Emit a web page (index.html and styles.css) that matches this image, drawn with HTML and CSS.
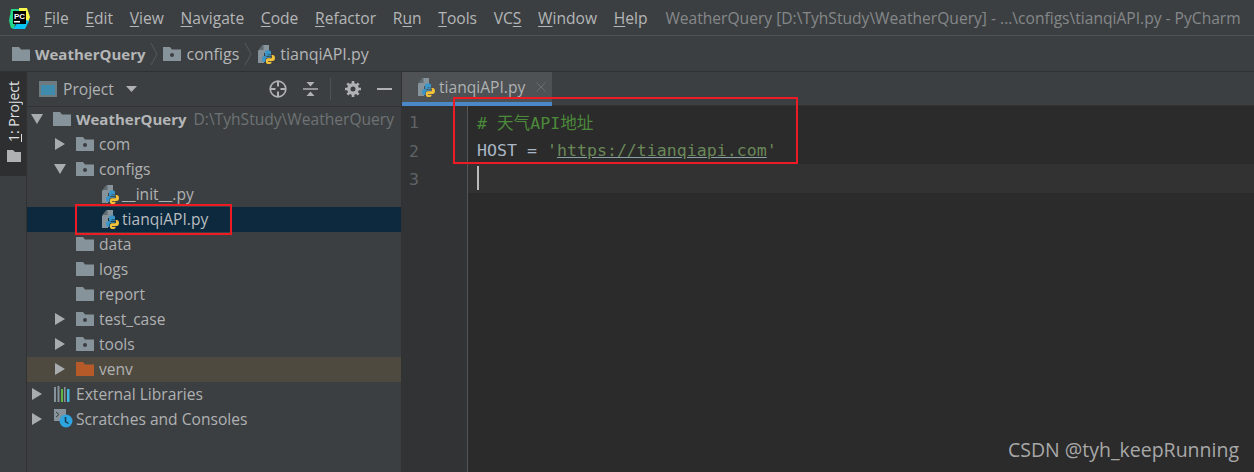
FILE: index.html
```html
<!DOCTYPE html>
<html lang="en">
<head>
<meta charset="utf-8">
<title>WeatherQuery - PyCharm</title>
<link rel="stylesheet" href="styles.css">
</head>
<body>
<svg class="defs" width="0" height="0">
  <defs>
    <symbol id="folder" viewBox="0 0 18 14"><path d="M0 0h7l2 2.500h9V14H0z" fill="#87939a"/></symbol>
    <symbol id="pkg" viewBox="0 0 18 14"><path d="M0 0h7l2 2.500h9V14H0z" fill="#87939a"/><circle cx="9" cy="8" r="2" fill="#3c3f41"/></symbol>
    <symbol id="venv" viewBox="0 0 18 14"><path d="M0 0h7l2 2.500h9V14H0z" fill="#b65a2a"/></symbol>
    <symbol id="py" viewBox="0 0 18 20">
      <path d="M1 7l5-6h6v8H7v10H1z" fill="#87939a"/>
      <path d="M5 1.500h1.500V6H1.500z" fill="#5f6a70"/>
      <path d="M8 8.500c0-1.500 1-2.200 3-2.200s3 .7 3 2v2.200H10.500v.8H14v.7H7.500c-1.500 0-2.500 1-2.500 3s1 3 2 3h1.500v-2.300c0-1.200.8-2 2-2H13c.8 0 1-.5 1-1H10c-1.200 0-2-.7-2-2z" fill="#3a95c8"/>
      <path d="M14.500 11h1.200c1.300 0 2.300 1 2.300 3s-1 3-2.300 3H11v.8h3.500v.9c0 .9-1.500 1.300-3 1.300s-2.500-.6-2.500-1.800V16c0-1 .8-1.700 1.800-1.700h2.900c.8 0 1.300-.6 1.300-1.300z" fill="#f2c23a"/>
    </symbol>
    <symbol id="right" viewBox="0 0 12 12"><path d="M1 0l10 6-10 6z" fill="#a9acae"/></symbol>
    <symbol id="down" viewBox="0 0 12 12"><path d="M0 1h12L6 11z" fill="#a9acae"/></symbol>
  </defs>
</svg>

<div class="app">
  <header class="menubar">
    <svg class="logo" width="21" height="21" viewBox="0 0 21 21">
      <path d="M2 1h10l-2 8-9-1z" fill="#21d789"/>
      <path d="M10 0h8l3 9-2 5-9-4z" fill="#fcf84a"/>
      <path d="M1 7l6 3-2 11-3-1-2-7z" fill="#21d789"/>
      <path d="M4 21h12l4-8-8-3z" fill="#07c3f2"/>
      <rect x="4" y="3" width="13" height="13" fill="#000"/>
      <text x="5" y="10.500" class="logo-text">PC</text>
      <rect x="5" y="13" width="6" height="1.500" fill="#fff"/>
    </svg>
    <nav class="menu">
      <span><u>F</u>ile</span><span><u>E</u>dit</span><span><u>V</u>iew</span><span><u>N</u>avigate</span><span><u>C</u>ode</span><span><u>R</u>efactor</span><span>R<u>u</u>n</span><span><u>T</u>ools</span><span>VC<u>S</u></span><span><u>W</u>indow</span><span><u>H</u>elp</span>
    </nav>
    <div class="title">WeatherQuery [D:\TyhStudy\WeatherQuery] - ...\configs\tianqiAPI.py - PyCharm</div>
  </header>

  <div class="navbar">
    <svg class="nav-icon" width="18" height="14"><use href="#folder"/></svg>
    <b class="crumb-bold">WeatherQuery</b>
    <svg class="chev" width="8" height="24" viewBox="0 0 8 24"><path d="M1 1l6 11-6 11" fill="none" stroke="#55595b"/></svg>
    <svg class="nav-icon" width="18" height="14"><use href="#pkg"/></svg>
    <span class="crumb">configs</span>
    <svg class="chev" width="8" height="24" viewBox="0 0 8 24"><path d="M1 1l6 11-6 11" fill="none" stroke="#55595b"/></svg>
    <svg class="nav-icon" width="18" height="20"><use href="#py"/></svg>
    <span class="crumb">tianqiAPI.py</span>
  </div>

  <div class="main">
    <aside class="stripe">
      <div class="stripe-tab">
        <span class="stripe-label"><u>1</u>: Project</span>
        <svg width="14" height="12" viewBox="0 0 14 12"><path d="M0 0h6l2 2h6v10H0z" fill="#afb1b3"/></svg>
      </div>
    </aside>

    <section class="project">
      <div class="proj-head">
        <svg class="proj-icon" width="18" height="16" viewBox="0 0 18 16"><rect width="18" height="16" fill="#6e7a80"/><rect x="2" y="4" width="14" height="10" fill="#3e8bae"/></svg>
        <span class="proj-title">Project</span>
        <svg class="proj-caret" width="11" height="6" viewBox="0 0 11 6"><path d="M0 0h11L5.500 6z" fill="#afb1b3"/></svg>
        <div class="proj-tools">
          <svg class="tool-target" width="18" height="18" viewBox="0 0 18 18"><circle cx="9" cy="9" r="7.800" fill="none" stroke="#afb1b3" stroke-width="1.700"/><path d="M9 1v5.500M9 11.500V17M1 9h5.500M11.500 9H17" stroke="#afb1b3" stroke-width="2"/></svg>
          <svg class="tool-collapse" width="15" height="16" viewBox="0 0 15 16"><path d="M0 8h15" stroke="#afb1b3" stroke-width="1.500"/><path d="M3.500 1h8l-4 4.500zM3.500 15h8l-4-4.500z" fill="#afb1b3"/></svg>
          <i class="tool-sep"></i>
          <svg class="tool-gear" width="16" height="16" viewBox="0 0 16 16"><circle cx="8" cy="8" r="4.200" fill="none" stroke="#afb1b3" stroke-width="3.400"/><path d="M8 0v16M0 8h16M2.300 2.300l11.400 11.400M13.700 2.300L2.300 13.700" stroke="#afb1b3" stroke-width="2.600" stroke-dasharray="3 10 3"/></svg>
          <svg class="tool-min" width="15" height="2" viewBox="0 0 15 2"><path d="M0 1h15" stroke="#afb1b3" stroke-width="2"/></svg>
        </div>
      </div>
      <ul class="tree">
        <li class="row l0"><svg class="arrow" width="12" height="12"><use href="#down"/></svg><svg class="ficon" width="18" height="14"><use href="#folder"/></svg><b>WeatherQuery</b><span class="path">D:\TyhStudy\WeatherQuery</span></li>
        <li class="row l1"><svg class="arrow" width="12" height="12"><use href="#right"/></svg><svg class="ficon" width="18" height="14"><use href="#pkg"/></svg>com</li>
        <li class="row l1"><svg class="arrow" width="12" height="12"><use href="#down"/></svg><svg class="ficon" width="18" height="14"><use href="#pkg"/></svg>configs</li>
        <li class="row l2"><svg class="ficon py" width="18" height="20"><use href="#py"/></svg>__init__.py</li>
        <li class="row l2 selected"><svg class="ficon py" width="18" height="20"><use href="#py"/></svg>tianqiAPI.py</li>
        <li class="row noarrow"><svg class="ficon" width="18" height="14"><use href="#folder"/></svg>data</li>
        <li class="row noarrow"><svg class="ficon" width="18" height="14"><use href="#folder"/></svg>logs</li>
        <li class="row noarrow"><svg class="ficon" width="18" height="14"><use href="#folder"/></svg>report</li>
        <li class="row l1"><svg class="arrow" width="12" height="12"><use href="#right"/></svg><svg class="ficon" width="18" height="14"><use href="#pkg"/></svg>test_case</li>
        <li class="row l1"><svg class="arrow" width="12" height="12"><use href="#right"/></svg><svg class="ficon" width="18" height="14"><use href="#pkg"/></svg>tools</li>
        <li class="row l1 excluded"><svg class="arrow" width="12" height="12"><use href="#right"/></svg><svg class="ficon" width="18" height="14"><use href="#venv"/></svg>venv</li>
        <li class="row l0"><svg class="arrow" width="12" height="12"><use href="#right"/></svg><svg class="ficon" width="18" height="16" viewBox="0 0 18 16"><path d="M1 1h2v15H1z" fill="#87939a"/><path d="M4.500 0h2v16h-2z" fill="#87939a"/><path d="M8 3h2v13H8z" fill="#62b543"/><path d="M11 1h1.500v15H11z" fill="#87939a"/><path d="M14 3h2.500v13H14z" fill="#40b6e0"/></svg>External Libraries</li>
        <li class="row l0"><svg class="arrow" width="12" height="12"><use href="#right"/></svg><svg class="ficon scr" width="20" height="19" viewBox="0 0 20 19"><path d="M1 0h12v12H1z" fill="#87939a"/><path d="M3 3l3 2.500L3 8" fill="none" stroke="#3c3f41" stroke-width="1"/><circle cx="13" cy="12" r="6.500" fill="#2da5e0"/><path d="M12.500 8v4.500l3 2" fill="none" stroke="#1b3a4b" stroke-width="1.500"/></svg>Scratches and Consoles</li>
      </ul>
    </section>

    <section class="editor">
      <div class="tabs">
        <div class="tab">
          <svg class="tab-icon" width="18" height="20"><use href="#py"/></svg>
          <span>tianqiAPI.py</span>
          <svg class="close" width="10" height="10" viewBox="0 0 10 10"><path d="M.5.500l9 9M9.500.500l-9 9" stroke="#6a6d6f"/></svg>
        </div>
      </div>
      <div class="code">
        <div class="gutter">
          <span class="num">1</span>
          <span class="num">2</span>
          <span class="num">3</span>
        </div>
        <div class="lines">
          <div class="line"><code class="comment"># 天气API地址</code></div>
          <div class="line"><code>HOST = <span class="str">'<span class="link">https://tianqiapi.com</span>'</span></code></div>
          <div class="line current"><i class="caret"></i></div>
        </div>
        <div class="watermark">CSDN @tyh_keepRunning</div>
      </div>
    </section>
  </div>
  <div class="mark mark-code"></div>
  <div class="mark mark-file"></div>
</div>
</body>
</html>
```

FILE: styles.css
```css
* { box-sizing: border-box; }
html, body { margin: 0; padding: 0; }
body { width: 1254px; height: 472px; overflow: hidden; background: #3c3f41; color: #afb1b3; font-family: "Open Sans", "Noto Sans", sans-serif; font-size: 15.600px; }
.defs { position: absolute; }
.app { position: relative; display: flex; flex-direction: column; width: 1254px; height: 472px; }

.menubar { display: flex; align-items: center; height: 36px; flex: none; background: #3c3f41; border-bottom: 1px solid #505355; padding-left: 9px; }
.logo { flex: none; margin: 2px 14px 0 0; }
.logo-text { font: bold 8px "Liberation Sans", sans-serif; fill: #fff; }
.menu { display: flex; gap: 16.700px; color: #b4b6b8; }
.menu u { text-underline-offset: 2px; }
.title { margin-left: 18px; color: #85888a; white-space: nowrap; }

.navbar { display: flex; align-items: center; height: 36px; flex: none; background: #3c3f41; border-bottom: 1px solid #2f3133; padding-left: 12px; }
.nav-icon { flex: none; margin-right: 5px; }
.crumb { color: #b4b6b8; font-size: 16px; }
.crumb-bold { color: #b4b6b8; font-size: 15px; }
.chev { flex: none; margin: 0 5px; }

.main { display: flex; flex: 1; min-height: 0; }
.stripe { width: 27px; flex: none; background: #3c3f41; border-right: 1px solid #323232; }
.stripe-tab { display: flex; flex-direction: column; align-items: center; gap: 8px; background: #2d2f30; height: 104px; padding: 9px 0 0 1px; }
.stripe-label { writing-mode: vertical-rl; transform: rotate(180deg); color: #e0e1e2; font-size: 14px; }

.project { width: 375px; flex: none; border-right: 1px solid #323232; }
.proj-head { display: flex; align-items: center; height: 35px; border-bottom: 1px solid #323232; padding-left: 12px; }
.proj-icon { flex: none; margin-right: 6px; }
.proj-caret { margin-left: 12px; }
.proj-tools { display: flex; align-items: center; margin-left: auto; padding-right: 9px; }
.tool-collapse { margin-left: 16px; }
.tool-sep { width: 1px; height: 22px; background: #4e5254; margin: 0 14px 0 12px; }
.tool-min { margin-left: 16px; }
.tree { list-style: none; margin: 0; padding: 0; }
.row { display: flex; align-items: center; height: 25px; padding-bottom: 2px; color: #afb1b3; white-space: nowrap; }
.row b { color: #b4b6b8; font-size: 15px; }
.row .path { margin-left: 7px; color: #6e7274; white-space: nowrap; }
.arrow { flex: none; margin-right: 10px; }
.l0 { padding-left: 4px; }
.l1 { padding-left: 27px; }
.l2 { padding-left: 74px; }
.noarrow { padding-left: 49px; }
.ficon { flex: none; margin-right: 5px; }
.ficon.py { margin-right: 3px; }
.ficon.scr { margin-right: 3px; }
.selected { background: #0d293e; color: #b9bcbe; }
.excluded { background: #4e4a3f; }

.editor { flex: 1; min-width: 0; display: flex; flex-direction: column; background: #2b2b2b; }
.tabs { height: 34px; flex: none; background: #3c3f41; display: flex; border-bottom: 1px solid #323232; }
.tab { display: flex; align-items: center; gap: 4px; width: 150px; height: 34px; padding: 0 14px 0 15px; background: #4e5254; border-bottom: 4px solid #4a88c7; }
.tab-icon, .close { flex: none; }
.close { margin-left: 7px; }
.code { position: relative; display: flex; flex: 1; font-family: "DejaVu Sans Mono", "Noto Sans CJK SC", monospace; font-size: 16.600px; }
.gutter { display: flex; flex-direction: column; width: 66px; flex: none; padding-top: 1px; background: #313335; border-right: 1px solid #555; }
.num { display: block; height: 28.500px; line-height: 31px; padding-left: 7px; color: #606366; }
.lines { flex: 1; min-width: 0; padding-top: 1px; }
.line { display: flex; align-items: center; height: 28.500px; padding: 2px 0 0 9px; }
.line.current { background: #323232; padding-top: 0; }
.line code { font: inherit; color: #a9b7c6; white-space: pre; }
.comment { color: #4b8a3a !important; }
.str { color: #6a8759; }
.link { text-decoration: underline; text-decoration-color: #8a9fa8; }
.caret { display: block; width: 2px; height: 24px; background: #bbb; }
.watermark { position: absolute; right: 15px; bottom: 9px; font-family: "Open Sans", sans-serif; font-size: 19.500px; color: #a8a8a8; }

.mark { position: absolute; border: 2px solid #ed1c24; pointer-events: none; }
.mark-code { left: 453px; top: 97px; width: 345px; height: 67px; }
.mark-file { left: 75px; top: 204px; width: 157px; height: 31px; }
```
